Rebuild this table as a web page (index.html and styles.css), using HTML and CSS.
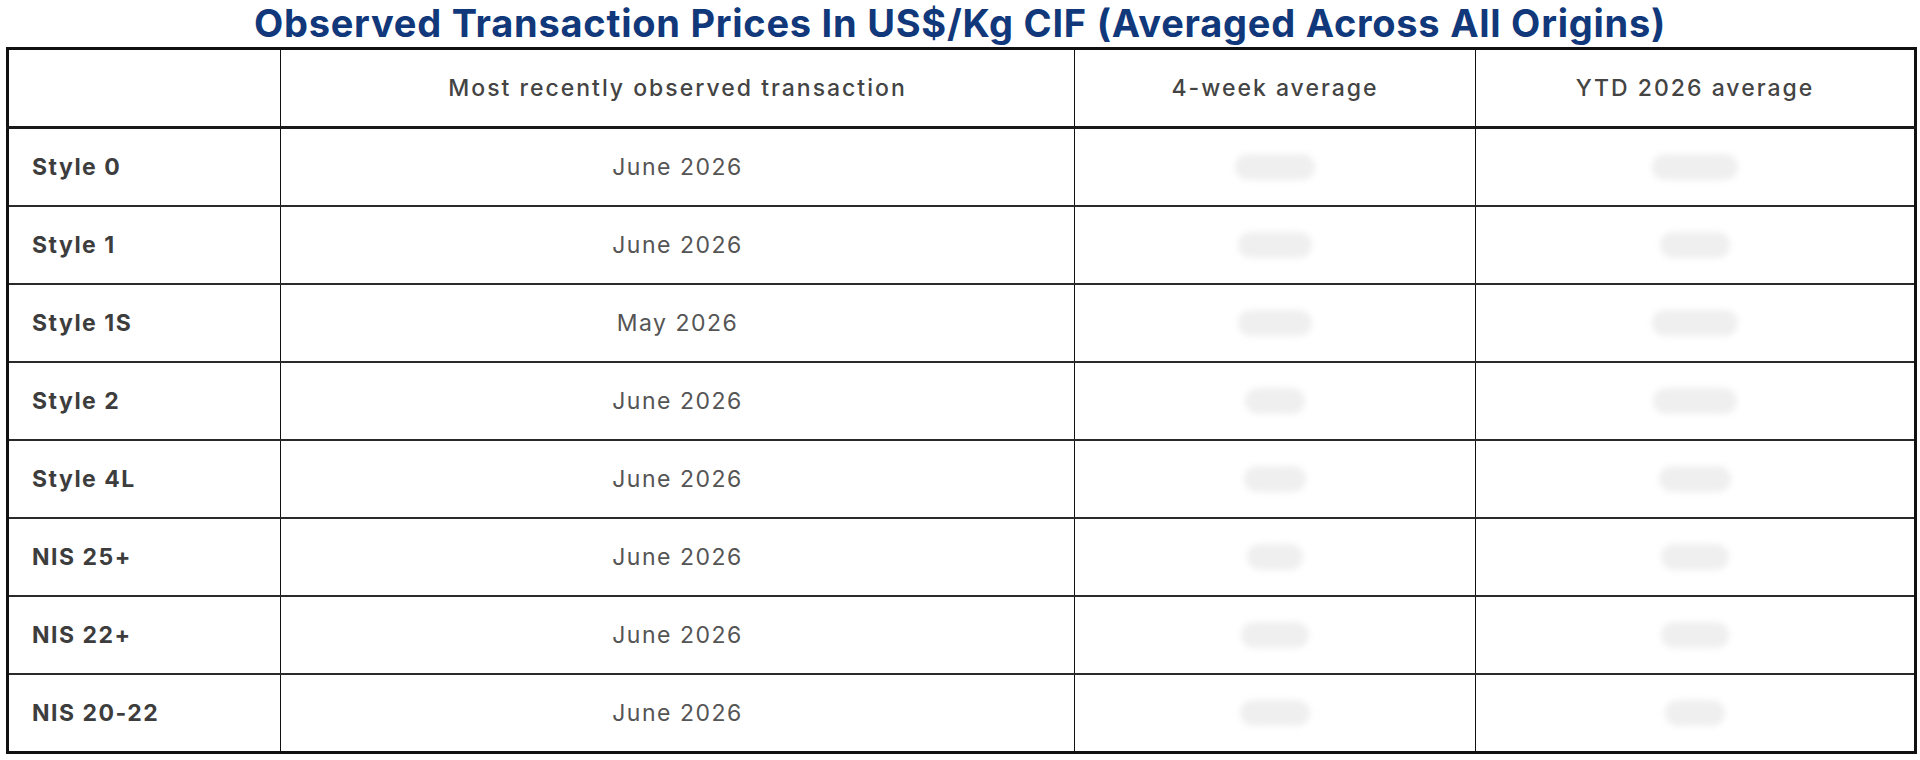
FILE: index.html
```html
<!DOCTYPE html>
<html lang="en">
<head>
<meta charset="utf-8">
<title>Observed Transaction Prices</title>
<link rel="stylesheet" href="styles.css">
</head>
<body>
<h1 class="title">Observed Transaction Prices In US$/Kg CIF (Averaged Across All Origins)</h1>
<table class="prices">
  <colgroup>
    <col class="c-name">
    <col class="c-recent">
    <col class="c-week">
    <col class="c-ytd">
  </colgroup>
  <thead>
    <tr>
      <th></th>
      <th>Most recently observed transaction</th>
      <th>4-week average</th>
      <th>YTD 2026 average</th>
    </tr>
  </thead>
  <tbody>
    <tr><td class="name">Style 0</td><td class="date">June 2026</td><td class="val"><span class="blur" style="width:80px"></span></td><td class="val"><span class="blur" style="width:86px"></span></td></tr>
    <tr><td class="name">Style 1</td><td class="date">June 2026</td><td class="val"><span class="blur" style="width:74px"></span></td><td class="val"><span class="blur" style="width:70px"></span></td></tr>
    <tr><td class="name">Style 1S</td><td class="date">May 2026</td><td class="val"><span class="blur" style="width:74px"></span></td><td class="val"><span class="blur" style="width:86px"></span></td></tr>
    <tr><td class="name">Style 2</td><td class="date">June 2026</td><td class="val"><span class="blur" style="width:60px"></span></td><td class="val"><span class="blur" style="width:84px"></span></td></tr>
    <tr><td class="name">Style 4L</td><td class="date">June 2026</td><td class="val"><span class="blur" style="width:62px"></span></td><td class="val"><span class="blur" style="width:72px"></span></td></tr>
    <tr><td class="name">NIS 25+</td><td class="date">June 2026</td><td class="val"><span class="blur" style="width:56px"></span></td><td class="val"><span class="blur" style="width:68px"></span></td></tr>
    <tr><td class="name">NIS 22+</td><td class="date">June 2026</td><td class="val"><span class="blur" style="width:68px"></span></td><td class="val"><span class="blur" style="width:68px"></span></td></tr>
    <tr><td class="name">NIS 20-22</td><td class="date">June 2026</td><td class="val"><span class="blur" style="width:70px"></span></td><td class="val"><span class="blur" style="width:60px"></span></td></tr>
  </tbody>
</table>
</body>
</html>
```
FILE: styles.css
```css
html, body {
  margin: 0;
  padding: 0;
  background: #ffffff;
}

body {
  padding: 0 6px;
  font-family: Inter, "Open Sans", "Liberation Sans", sans-serif;
}

.title {
  margin: 0;
  height: 47px;
  display: flex;
  align-items: center;
  justify-content: center;
  font-family: Inter, "Open Sans", sans-serif;
  font-weight: 700;
  font-size: 38px;
  line-height: 1;
  color: #10387a;
  letter-spacing: 0.75px;
  padding-bottom: 2px;
  box-sizing: border-box;
}

.prices {
  width: 1908px;
  border-collapse: collapse;
  table-layout: fixed;
  border: 3px solid #111;
}

.c-name { width: 273px; }
.c-recent { width: 794px; }
.c-week { width: 401px; }
.c-ytd { width: 440px; }

.prices th,
.prices td {
  height: 76px;
  padding: 0;
  border-left: 1px solid #111;
  border-right: 1px solid #111;
  border-top: 2px solid #2a2a2a;
  border-bottom: 2px solid #2a2a2a;
  text-align: center;
  vertical-align: middle;
}

.prices thead th {
  border-bottom: 3px solid #1a1a1a;
  font-weight: 500;
  font-size: 23px;
  letter-spacing: 2px;
  color: #444444;
}

.prices td.name {
  text-align: left;
  padding-left: 23px;
  font-weight: 700;
  font-size: 23px;
  letter-spacing: 1.5px;
  color: #3d3d3d;
}

.prices td.date {
  font-weight: 400;
  font-size: 23px;
  letter-spacing: 1.5px;
  color: #555555;
}

.blur {
  display: inline-block;
  height: 26px;
  border-radius: 13px;
  background: #efefef;
  filter: blur(3px);
  vertical-align: middle;
}
```
